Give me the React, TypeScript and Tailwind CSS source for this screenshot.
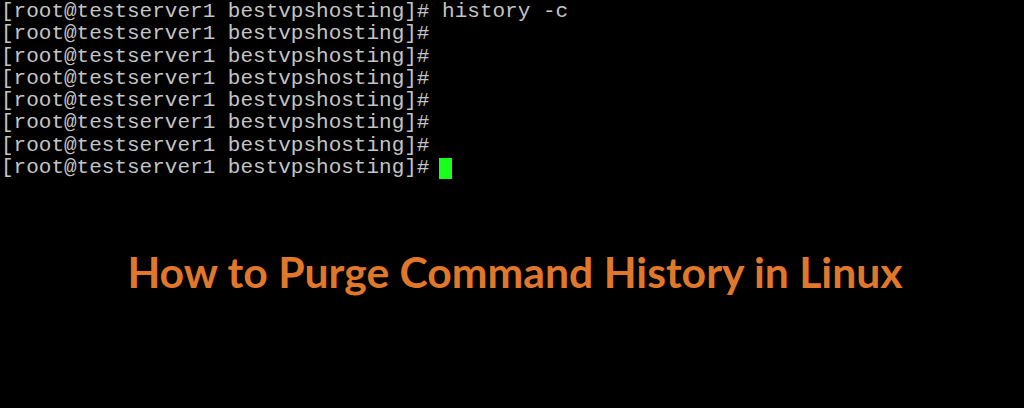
const lines = [
  '[root@testserver1 bestvpshosting]# history -c',
  '[root@testserver1 bestvpshosting]#',
  '[root@testserver1 bestvpshosting]#',
  '[root@testserver1 bestvpshosting]#',
  '[root@testserver1 bestvpshosting]#',
  '[root@testserver1 bestvpshosting]#',
  '[root@testserver1 bestvpshosting]#',
];

export default function App() {
  return (
    <div className="w-[1024px] h-[408px] bg-black overflow-hidden flex flex-col">
      <div className="pt-[1px] pl-[1px] font-['Liberation_Mono',monospace] text-[21px] leading-[22.3px] text-[#c4c4c4] whitespace-pre">
        {lines.map((l, i) => (
          <div key={i}>{l}</div>
        ))}
        <div className="flex items-center">
          <span>[root@testserver1 bestvpshosting]#</span>
          <span className="inline-block ml-[10px] w-[13px] h-[21px] bg-[#1aff1a]" />
        </div>
      </div>
      <div className="mt-[68px] pl-[6px] text-center font-['Lato',sans-serif] font-bold text-[42.7px] leading-[50px] text-[#e0782c]">
        How to Purge Command History in Linux
      </div>
    </div>
  );
}
